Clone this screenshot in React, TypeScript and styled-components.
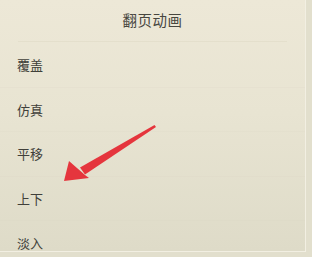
import React from 'react';
import styled, { createGlobalStyle } from 'styled-components';

const GlobalStyle = createGlobalStyle`
  html, body {
    margin: 0;
    padding: 0;
    background: #dedbc9;
  }
  body {
    font-family: "Noto Sans CJK SC", "Noto Sans", sans-serif;
  }
`;

const Page = styled.div`
  position: relative;
  width: 312px;
  height: 257px;
  overflow: hidden;
  background: #e2dfcd;
`;

const Panel = styled.div`
  width: 305px;
  height: 251px;
  display: flex;
  flex-direction: column;
  background: linear-gradient(180deg, #ede8d7 0%, #e8e4d2 45%, #dedbc8 100%);
  border-right: 1px solid #f2efe2;
  border-bottom: 1px solid #f2efe2;
  overflow: hidden;
`;

const Title = styled.div`
  height: 42px;
  flex-shrink: 0;
  display: flex;
  align-items: center;
  justify-content: center;
  font-size: 14.5px;
  color: #47463f;
  letter-spacing: 0.5px;
  padding-bottom: 2px;
  box-sizing: border-box;
  border-bottom: 1px solid rgba(225, 219, 200, 0.7);
  margin: 0 18px;
`;

const List = styled.div`
  display: flex;
  flex-direction: column;
`;

const Row = styled.div<{ $first?: boolean }>`
  height: 44.5px;
  flex-shrink: 0;
  display: flex;
  align-items: center;
  padding-left: 17px;
  font-size: 13px;
  color: #403f3a;
  border-top: 1px solid ${p => (p.$first ? 'transparent' : 'rgba(215, 210, 192, 0.18)')};
  box-sizing: border-box;
`;

const Arrow = styled.svg`
  position: absolute;
  left: 0;
  top: 0;
  pointer-events: none;
`;

const items = ['覆盖', '仿真', '平移', '上下', '淡入'];

export default function App() {
  return (
    <>
      <GlobalStyle />
      <Page>
        <Panel>
          <Title>翻页动画</Title>
          <List>
            {items.map((t, i) => (
              <Row key={t} $first={i === 0}>{t}</Row>
            ))}
          </List>
        </Panel>
        <Arrow width="312" height="257" viewBox="0 0 312 257">
          <defs>
            <filter id="soft" x="-20%" y="-20%" width="140%" height="140%">
              <feGaussianBlur stdDeviation="0.7" />
            </filter>
          </defs>
          <g filter="url(#soft)" fill="#e5363d">
            <polygon points="154.5,125 156,127 85,174.5 80,167.5" />
            <polygon points="64,181 69,161 77,168 85,175 89,178" />
          </g>
        </Arrow>
      </Page>
    </>
  );
}
